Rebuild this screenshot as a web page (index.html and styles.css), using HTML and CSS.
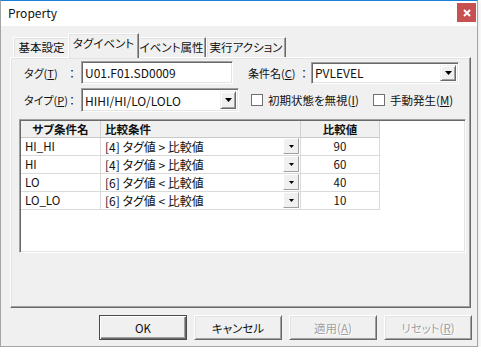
FILE: index.html
```html
<!DOCTYPE html>
<html lang="ja">
<head>
    <meta charset="UTF-8">
    <title>Property</title>
    <link rel="stylesheet" href="styles.css">
</head>
<body>

<div class="window">
    <!-- Title bar -->
    <div class="titlebar">
        <span class="title">Property</span>
        <span class="close">
            <svg width="8" height="8" viewBox="0 0 8 8"><path d="M1 1L7 7M7 1L1 7" stroke="#fff" stroke-width="2"/></svg>
        </span>
    </div>

    <div class="dialog">
        <!-- Tabs -->
        <div class="tabs">
            <div class="tab tab-basic">基本設定</div>
            <div class="tab tab-event active">タグイベント</div>
            <div class="tab tab-attr">イベント属性</div>
            <div class="tab tab-action">実行アクション</div>
        </div>

        <div class="panel">
            <div class="row row-tag">
                <span class="lbl lbl-short">タグ(<u>T</u>)</span><span class="colon">：</span>
                <div class="textbox tag-box">U01.F01.SD0009</div>
                <span class="lbl lbl-cond">条件名(<u>C</u>)</span><span class="colon">：</span>
                <div class="combo cond-combo">
                    <span class="combo-text">PVLEVEL</span>
                    <span class="combo-btn"><svg width="7" height="4" viewBox="0 0 7 4"><path d="M0 0H7L3.5 4Z"/></svg></span>
                </div>
            </div>

            <div class="row row-type">
                <span class="lbl lbl-short">タイプ(<u>P</u>)</span><span class="colon">：</span>
                <div class="combo type-combo">
                    <span class="combo-text">HIHI/HI/LO/LOLO</span>
                    <span class="combo-btn"><svg width="7" height="4" viewBox="0 0 7 4"><path d="M0 0H7L3.5 4Z"/></svg></span>
                </div>
                <label class="check check-init"><span class="box"></span>初期状態を無視(<u>I</u>)</label>
                <label class="check check-manual"><span class="box"></span>手動発生(<u>M</u>)</label>
            </div>

            <!-- Sub condition grid -->
            <div class="grid">
                <div class="grow ghead">
                    <div class="gc c1">サブ条件名</div>
                    <div class="gc c2">比較条件</div>
                    <div class="gc c3">比較値</div>
                </div>
                <div class="grow">
                    <div class="gc c1">HI_HI</div>
                    <div class="gc c2"><span class="cond">[4] タグ値 &gt; 比較値</span><span class="cell-btn"><svg width="5" height="3" viewBox="0 0 5 3"><path d="M0 0H5L2.5 3Z"/></svg></span></div>
                    <div class="gc c3">90</div>
                </div>
                <div class="grow">
                    <div class="gc c1">HI</div>
                    <div class="gc c2"><span class="cond">[4] タグ値 &gt; 比較値</span><span class="cell-btn"><svg width="5" height="3" viewBox="0 0 5 3"><path d="M0 0H5L2.5 3Z"/></svg></span></div>
                    <div class="gc c3">60</div>
                </div>
                <div class="grow">
                    <div class="gc c1">LO</div>
                    <div class="gc c2"><span class="cond">[6] タグ値 &lt; 比較値</span><span class="cell-btn"><svg width="5" height="3" viewBox="0 0 5 3"><path d="M0 0H5L2.5 3Z"/></svg></span></div>
                    <div class="gc c3">40</div>
                </div>
                <div class="grow">
                    <div class="gc c1">LO_LO</div>
                    <div class="gc c2"><span class="cond">[6] タグ値 &lt; 比較値</span><span class="cell-btn"><svg width="5" height="3" viewBox="0 0 5 3"><path d="M0 0H5L2.5 3Z"/></svg></span></div>
                    <div class="gc c3">10</div>
                </div>
            </div>
        </div>

        <!-- Buttons -->
        <div class="buttons">
            <button class="btn default">OK</button>
            <button class="btn">キャンセル</button>
            <button class="btn" disabled>適用(<u>A</u>)</button>
            <button class="btn" disabled>リセット(<u>R</u>)</button>
        </div>
    </div>
</div>

</body>
</html>
```

FILE: styles.css
```css
* {
    box-sizing: border-box;
}

body {
    margin: 0;
    background: #fff;
    font-family: "Noto Sans CJK JP", "Noto Sans", sans-serif;
    font-size: 11px;
    color: #111;
    font-feature-settings: "palt";
}

u {
    text-decoration: underline;
    text-underline-offset: 1px;
}

/* Window frame */
.window {
    width: 478px;
    height: 347px;
    background: #f0f0f0;
    border: 1px solid #a5a5a5;
    border-top-color: #1b80d6;
    box-shadow: 2px 2px 4px rgba(0, 0, 0, 0.08);
}

.titlebar {
    height: 25px;
    background: #fff;
    display: flex;
    justify-content: space-between;
    align-items: flex-start;
    padding-left: 7px;
}

.title {
    line-height: 24px;
    font-size: 12px;
}

.close {
    width: 19px;
    height: 19px;
    margin: 2px 1px 0 0;
    background: #c75050;
    display: flex;
    align-items: center;
    justify-content: center;
}

.dialog {
    padding: 7px 5px 0 9px;
}

/* Tabs */
.tabs {
    height: 24px;
    display: flex;
    align-items: flex-end;
    padding-left: 3px;
}

.tab {
    height: 20px;
    line-height: 19px;
    text-align: center;
    background: #f0f0f0;
    border-top: 1px solid #fff;
    border-left: 1px solid #fff;
    border-right: 1px solid #696969;
    box-shadow: inset -1px 0 #a0a0a0, inset 1px 1px #e3e3e3;
    white-space: nowrap;
    font-size: 11.5px;
}

.tab-basic { width: 57px; }
.tab-event { width: 67px; }
.tab-attr { width: 69px; }
.tab-action { width: 80px; }

.tab.active {
    position: relative;
    z-index: 1;
    height: 25px;
    width: 71px;
    margin: 0 -2px -1px -2px;
    line-height: 18px;
}

.panel {
    width: 461px;
    height: 251px;
    border: 1px solid;
    border-color: #fff #696969 #696969 #fff;
    box-shadow: inset -1px -1px #a0a0a0, inset 1px 1px #e3e3e3;
    padding: 3px 0 0 0;
}

/* Form rows */
.row {
    display: flex;
    align-items: center;
    padding-left: 13px;
}

.row-tag {
    height: 23px;
}

.row-type {
    height: 24px;
    margin-top: 4px;
}

.lbl {
    white-space: nowrap;
}

.lbl-short {
    width: 42px;
}

.lbl-cond {
    width: 50px;
    margin-left: 15px;
}

.colon {
    width: 12px;
    text-align: center;
    font-feature-settings: normal;
}

.textbox,
.combo {
    background: #fff;
    border: 1px solid;
    border-color: #a0a0a0 #fff #fff #a0a0a0;
    box-shadow: inset 1px 1px #696969, inset -1px -1px #e3e3e3;
    padding-left: 3px;
    white-space: nowrap;
    font-size: 12px;
}

.tag-box {
    width: 152px;
    height: 23px;
    line-height: 21px;
    margin-left: 3px;
}

.combo {
    display: flex;
    align-items: center;
    padding-right: 2px;
}

.combo-text {
    flex: 1;
}

.cond-combo {
    width: 148px;
    height: 22px;
    margin-left: 1px;
}

.type-combo {
    width: 158px;
    height: 24px;
    margin-left: 3px;
}

.combo-btn {
    width: 16px;
    height: calc(100% - 4px);
    background: #f0f0f0;
    border: 1px solid;
    border-color: #f0f0f0 #696969 #696969 #f0f0f0;
    box-shadow: inset 1px 1px #fff, inset -1px -1px #a0a0a0;
    display: flex;
    align-items: center;
    justify-content: center;
}

/* Checkboxes */
.check {
    display: flex;
    align-items: center;
    white-space: nowrap;
    font-size: 11.5px;
}

.check .box {
    width: 12px;
    height: 12px;
    background: #fff;
    border: 1px solid #707070;
    margin-right: 5px;
}

.check-init {
    width: 122px;
    margin-left: 12px;
}

/* Grid */
.grid {
    width: 447px;
    height: 134px;
    margin: 7px 0 0 8px;
    background: #fff;
    border: 1px solid;
    border-color: #a0a0a0 #fff #fff #a0a0a0;
    box-shadow: inset 1px 1px #696969, inset -1px -1px #e3e3e3;
    padding: 1px 0 0 1px;
}

.grow {
    display: flex;
    height: 18px;
}

.gc {
    height: 18px;
    line-height: 17px;
    border-right: 1px solid #dadada;
    border-bottom: 1px solid #dadada;
    white-space: nowrap;
    font-size: 11.5px;
}

.c1 {
    width: 80px;
    padding-left: 4px;
}

.c2 {
    width: 200px;
    padding-left: 4px;
    display: flex;
    align-items: center;
}

.c3 {
    width: 79px;
    text-align: center;
}

.ghead {
    height: 17px;
}

.ghead .gc {
    height: 17px;
    line-height: 16px;
    background: #f0f0f0;
    font-weight: bold;
    border-bottom-color: #c8c8c8;
    border-right-color: #d0d0d0;
}

.ghead .c1 {
    text-align: center;
    padding-left: 0;
}

.cond {
    flex: 1;
    font-size: 12px;
}

.cell-btn {
    width: 16px;
    height: 16px;
    margin: 0 1px 1px 0;
    background: #f0f0f0;
    border: 1px solid;
    border-color: #fff #a0a0a0 #a0a0a0 #fff;
    display: flex;
    align-items: center;
    justify-content: center;
}

/* Buttons */
.buttons {
    display: flex;
    justify-content: flex-end;
    gap: 7px;
    margin-top: 7px;
}

.btn {
    width: 88px;
    height: 25px;
    font-family: inherit;
    font-size: 11.5px;
    color: #111;
    background: #f0f0f0;
    border: 1px solid;
    border-color: #fff #696969 #696969 #fff;
    box-shadow: inset 1px 1px #e3e3e3, inset -1px -1px #a0a0a0;
    padding: 0;
    font-feature-settings: "palt";
}

.btn.default {
    border-color: #4a4a4a;
    box-shadow: inset 1px 1px #fff, inset -1px -1px #696969, inset -2px -2px #a0a0a0;
}

.btn:disabled {
    color: #a0a0a0;
    text-shadow: 1px 1px #fff;
}
```
